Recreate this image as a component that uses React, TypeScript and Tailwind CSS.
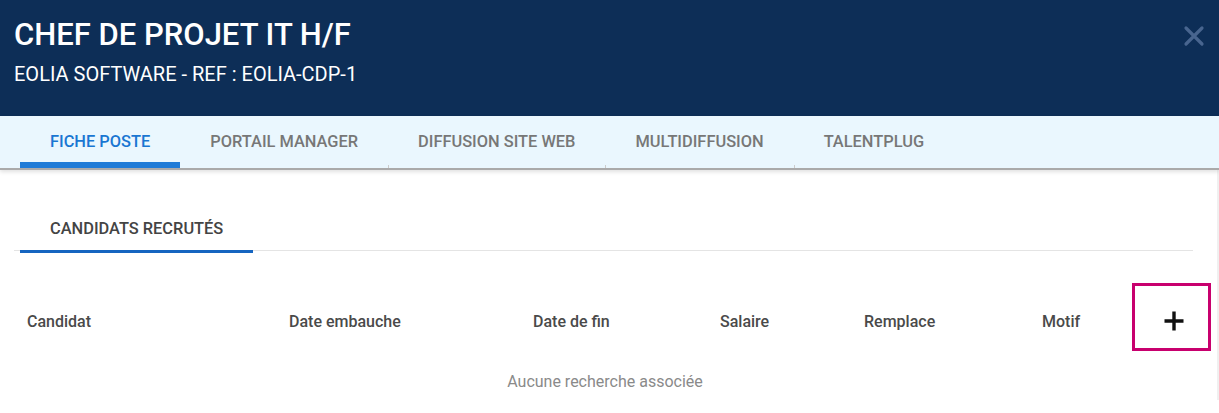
import React from "react";

const tabs = ["FICHE POSTE", "PORTAIL MANAGER", "DIFFUSION SITE WEB", "MULTIDIFFUSION", "TALENTPLUG"];
const cols: [string, string][] = [
  ["Candidat", "w-[262px]"],
  ["Date embauche", "w-[244px]"],
  ["Date de fin", "w-[187px]"],
  ["Salaire", "w-[144px]"],
  ["Remplace", "w-[178px]"],
  ["Motif", "w-[103px]"],
];

export default function App() {
  return (
    <div className="w-[1219px] h-[413px] overflow-hidden bg-white font-['Roboto',sans-serif] relative">
      <header className="h-[116px] bg-[#0d2e57] flex justify-between pl-[14px] pr-[14px]">
        <div className="pt-[16px]">
          <h1 className="text-[31px] leading-[38px] font-medium text-white">CHEF DE PROJET IT H/F</h1>
          <div className="text-[20px] leading-[24px] text-white mt-[8px]">EOLIA SOFTWARE - REF : EOLIA-CDP-1</div>
        </div>
        <div className="pt-[25px]">
          <svg width="22" height="22" viewBox="0 0 22 22" className="text-[#48658f]">
            <path d="M3 3L19 19M19 3L3 19" stroke="currentColor" strokeWidth="3.2" strokeLinecap="round" />
          </svg>
        </div>
      </header>
      <nav className="h-[54px] bg-[#eaf7fe] border-b-2 border-[#aaaaaa] shadow-[0_2px_4px_rgba(0,0,0,0.12)] flex pl-[20px] relative z-10">
        {tabs.map((t, i) => (
          <div
            key={t}
            className={`relative h-full flex items-center px-[30px] text-[16.4px] font-medium ${
              i === 0 ? "text-[#1976d2]" : "text-[#777777]"
            }`}
          >
            {t}
            {i === 0 && <span className="absolute left-0 right-0 bottom-0 h-[6px] bg-[#1e7bd7]" />}
            {i > 1 && <span className="absolute left-0 bottom-0 w-px h-[3px] bg-[#cccccc]" />}
          </div>
        ))}
      </nav>
      <main className="pl-[14px] pr-[8px]">
        <div className="mt-[37px] mr-[18px] border-b border-[#e4e4e4] flex">
          <div className="ml-[6px] px-[30px] h-[44px] flex items-center text-[16.4px] font-medium text-[#444444] relative -mb-px">
            CANDIDATS RECRUTÉS
            <span className="absolute left-0 right-0 bottom-[-2px] h-[3px] bg-[#1565c0]" />
          </div>
        </div>
        <div className="mt-[32px] flex items-center">
          {cols.map(([c, w]) => (
            <div key={c} className={`${w} pl-[13px] pt-[9px] text-[16px] font-medium text-[#4a4a4a]`}>
              {c}
            </div>
          ))}
          <button className="w-[79px] h-[68px] border-[3px] border-[#c8006e] flex items-center justify-center">
            <svg width="20" height="20" viewBox="0 0 20 20" className="mt-[8px] ml-[5px]">
              <path d="M10 0.5V19.5M0.5 10H19.5" stroke="#111111" strokeWidth="3.4" />
            </svg>
          </button>
        </div>
        <div className="mt-[19px] text-center pr-[8px] text-[16px] text-[#8a8a8a]">
          <span className="ml-[-7px]">Aucune recherche associée</span>
        </div>
      </main>
      <div className="absolute right-0 top-[170px] h-[230px] w-[2px] bg-[#f0f0f0]" />
    </div>
  );
}
